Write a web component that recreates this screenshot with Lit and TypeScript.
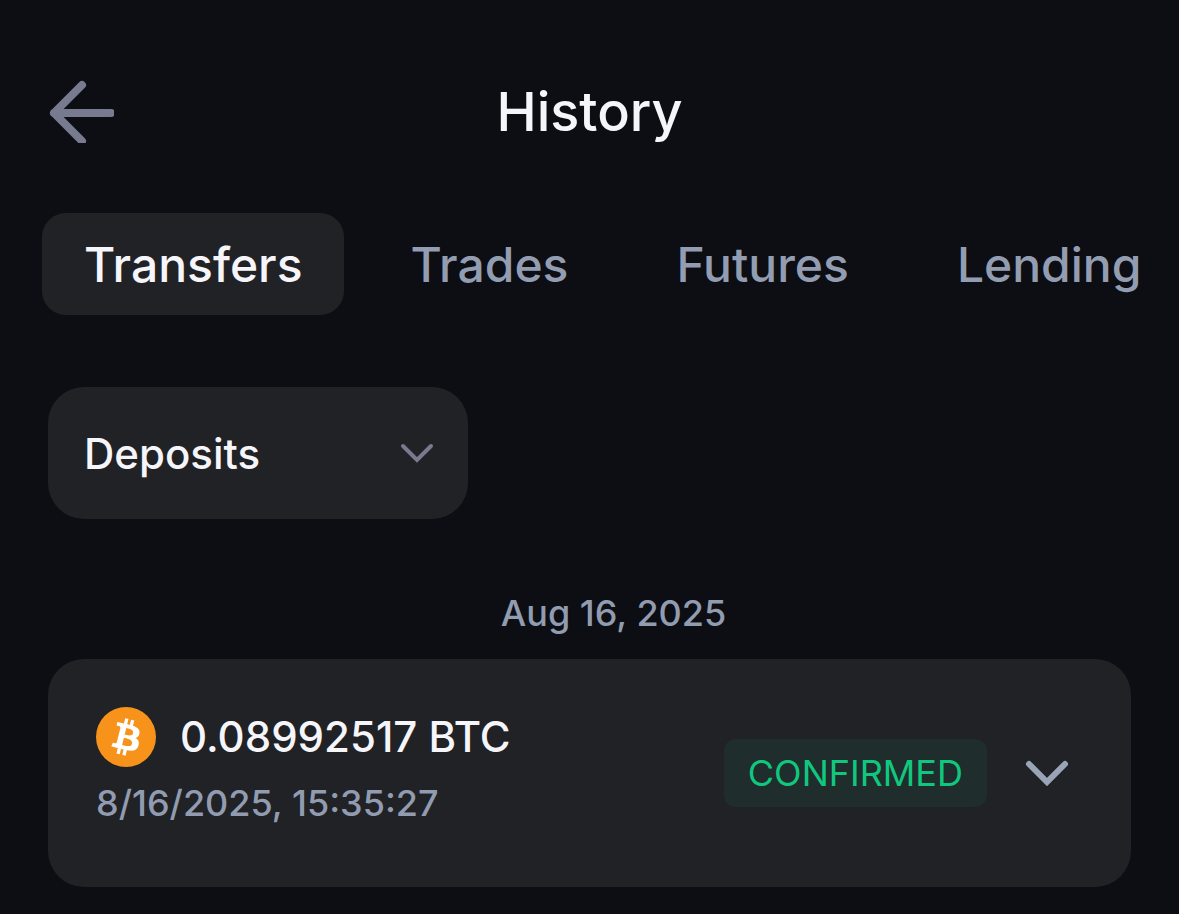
import { LitElement, html, css } from "lit";
import { customElement, property, state } from "lit/decorators.js";
import { classMap } from "lit/directives/class-map.js";

interface Transfer {
  amount: string;
  time: string;
  status: string;
}

@customElement("transfer-card")
class TransferCard extends LitElement {
  @property({ attribute: false }) transfer!: Transfer;

  static styles = css`
    :host {
      display: block;
    }
    .card {
      display: flex;
      align-items: center;
      gap: 24px;
      padding: 48px;
      border-radius: 36px;
      background: #212226;
    }
    .details {
      flex: 1;
      min-width: 0;
    }
    .amount {
      display: flex;
      align-items: center;
      gap: 24px;
      font-size: 42px;
      font-weight: 500;
      line-height: 60px;
      color: #f5f5fa;
    }
    .coin {
      width: 60px;
      height: 60px;
      flex: none;
    }
    .time {
      display: block;
      font-size: 36px;
      font-weight: 500;
      line-height: 72px;
      color: #919cb1;
    }
    .status {
      padding: 12px 24px;
      border-radius: 12px;
      background: #1f2d2d;
      font-size: 36px;
      line-height: 44px;
      color: #11c67e;
    }
    .toggle {
      display: grid;
      place-items: center;
      width: 72px;
      height: 72px;
      margin: 0;
      padding: 0;
      border: 0;
      background: none;
      color: #9aa4b7;
      cursor: pointer;
    }
  `;

  render() {
    return html`
      <article class="card">
        <div class="details">
          <div class="amount">
            <svg class="coin" viewBox="0 0 32 32" aria-hidden="true">
              <circle cx="16" cy="16" r="16" fill="#f7931a" />
              <path
                fill="#fff"
                d="M23.189 14.02c.314-2.096-1.283-3.223-3.465-3.975l.708-2.84-1.728-.43-.69 2.765c-.454-.114-.92-.22-1.385-.326l.695-2.783L15.596 6l-.708 2.839c-.376-.086-.746-.17-1.104-.26l.002-.009-2.384-.595-.46 1.846s1.283.294 1.256.312c.7.175.826.638.805 1.006l-.806 3.235c.048.012.11.03.18.057l-.183-.045-1.13 4.532c-.086.212-.303.531-.793.41.018.025-1.256-.313-1.256-.313l-.858 1.978 2.25.561c.418.105.828.215 1.231.318l-.715 2.872 1.727.43.708-2.84c.472.127.93.245 1.378.357l-.706 2.828 1.728.43.715-2.866c2.948.558 5.164.333 6.097-2.333.752-2.146-.037-3.385-1.588-4.192 1.13-.26 1.98-1.003 2.207-2.538zm-3.95 5.538c-.533 2.147-4.148.986-5.32.695l.95-3.805c1.172.293 4.929.872 4.37 3.11zm.535-5.569c-.487 1.953-3.495.96-4.47.717l.86-3.45c.975.243 4.118.696 3.61 2.733z"
              />
            </svg>
            <span>${this.transfer.amount}</span>
          </div>
          <time class="time">${this.transfer.time}</time>
        </div>
        <span class="status">${this.transfer.status}</span>
        <button class="toggle" type="button" aria-label="Details">
          <svg width="44" height="26" viewBox="0 0 44 26" fill="none" aria-hidden="true">
            <path d="M4 4l18 18L40 4" stroke="currentColor" stroke-width="6" stroke-linecap="round" />
          </svg>
        </button>
      </article>
    `;
  }
}

@customElement("app-root")
class AppRoot extends LitElement {
  @state() private tab = "Transfers";

  private tabs = ["Transfers", "Trades", "Futures", "Lending"];

  private transfers: Transfer[] = [
    { amount: "0.08992517 BTC", time: "8/16/2025, 15:35:27", status: "CONFIRMED" },
  ];

  static styles = css`
    :host {
      display: block;
      box-sizing: border-box;
      min-height: 100vh;
      overflow: hidden;
      background: #0d0e13;
      color: #f5f5fa;
      font-family: Inter, "Liberation Sans", sans-serif;
    }
    .header {
      display: grid;
      grid-template-columns: 1fr auto 1fr;
      padding: 80px 48px 0;
    }
    .back {
      justify-self: start;
      align-self: start;
      margin: 0;
      padding: 0;
      border: 0;
      background: none;
      color: #787b8f;
      cursor: pointer;
    }
    .back svg {
      display: block;
    }
    .title {
      margin: 0;
      font-size: 54px;
      font-weight: 500;
      line-height: 64px;
    }
    .tabs {
      display: flex;
      gap: 24px;
      margin-top: 69px;
      padding-left: 42px;
      overflow: hidden;
    }
    .tab {
      flex: none;
      margin: 0;
      padding: 22px 42px 20px;
      border: 0;
      border-radius: 24px;
      background: none;
      color: #929db2;
      font: 500 48px/60px Inter, "Liberation Sans", sans-serif;
      cursor: pointer;
    }
    .tab.active {
      background: #212226;
      color: #f5f5fa;
    }
    .content {
      padding: 72px 48px 27px;
    }
    .filter {
      display: grid;
      align-items: center;
      width: 420px;
      max-width: 100%;
    }
    .filter select,
    .filter svg {
      grid-area: 1 / 1;
    }
    .filter select {
      appearance: none;
      width: 100%;
      height: 132px;
      margin: 0;
      padding: 2px 96px 0 36px;
      border: 0;
      border-radius: 36px;
      background: #212226;
      color: #f5f5fa;
      font: 500 42px/60px Inter, "Liberation Sans", sans-serif;
    }
    .filter svg {
      justify-self: end;
      margin-right: 34px;
      color: #787b8f;
      pointer-events: none;
    }
    .date {
      margin: 70px 0 22px;
      padding-left: 48px;
      text-align: center;
      font-size: 36px;
      font-weight: 500;
      line-height: 48px;
      color: #919cb1;
    }
  `;

  render() {
    return html`
      <header class="header">
        <button class="back" type="button" aria-label="Back">
          <svg width="66" height="63" viewBox="0 0 66 63" fill="none" aria-hidden="true">
            <path
              d="M34 5L6 33l28 28M6 33h57"
              stroke="currentColor"
              stroke-width="8"
              stroke-linecap="round"
              stroke-linejoin="round"
            />
          </svg>
        </button>
        <h1 class="title">History</h1>
      </header>
      <nav class="tabs">
        ${this.tabs.map(
          (name) => html`
            <button
              type="button"
              class=${classMap({ tab: true, active: name === this.tab })}
              @click=${() => (this.tab = name)}
            >${name}</button>
          `
        )}
      </nav>
      <main class="content">
        <div class="filter">
          <select aria-label="Transfer type">
            <option>Deposits</option>
          </select>
          <svg width="34" height="22" viewBox="0 0 34 22" fill="none" aria-hidden="true">
            <path d="M3 4l14 14L31 4" stroke="currentColor" stroke-width="4" stroke-linecap="round" />
          </svg>
        </div>
        <h2 class="date">Aug 16, 2025</h2>
        ${this.transfers.map((t) => html`<transfer-card .transfer=${t}></transfer-card>`)}
      </main>
    `;
  }
}
